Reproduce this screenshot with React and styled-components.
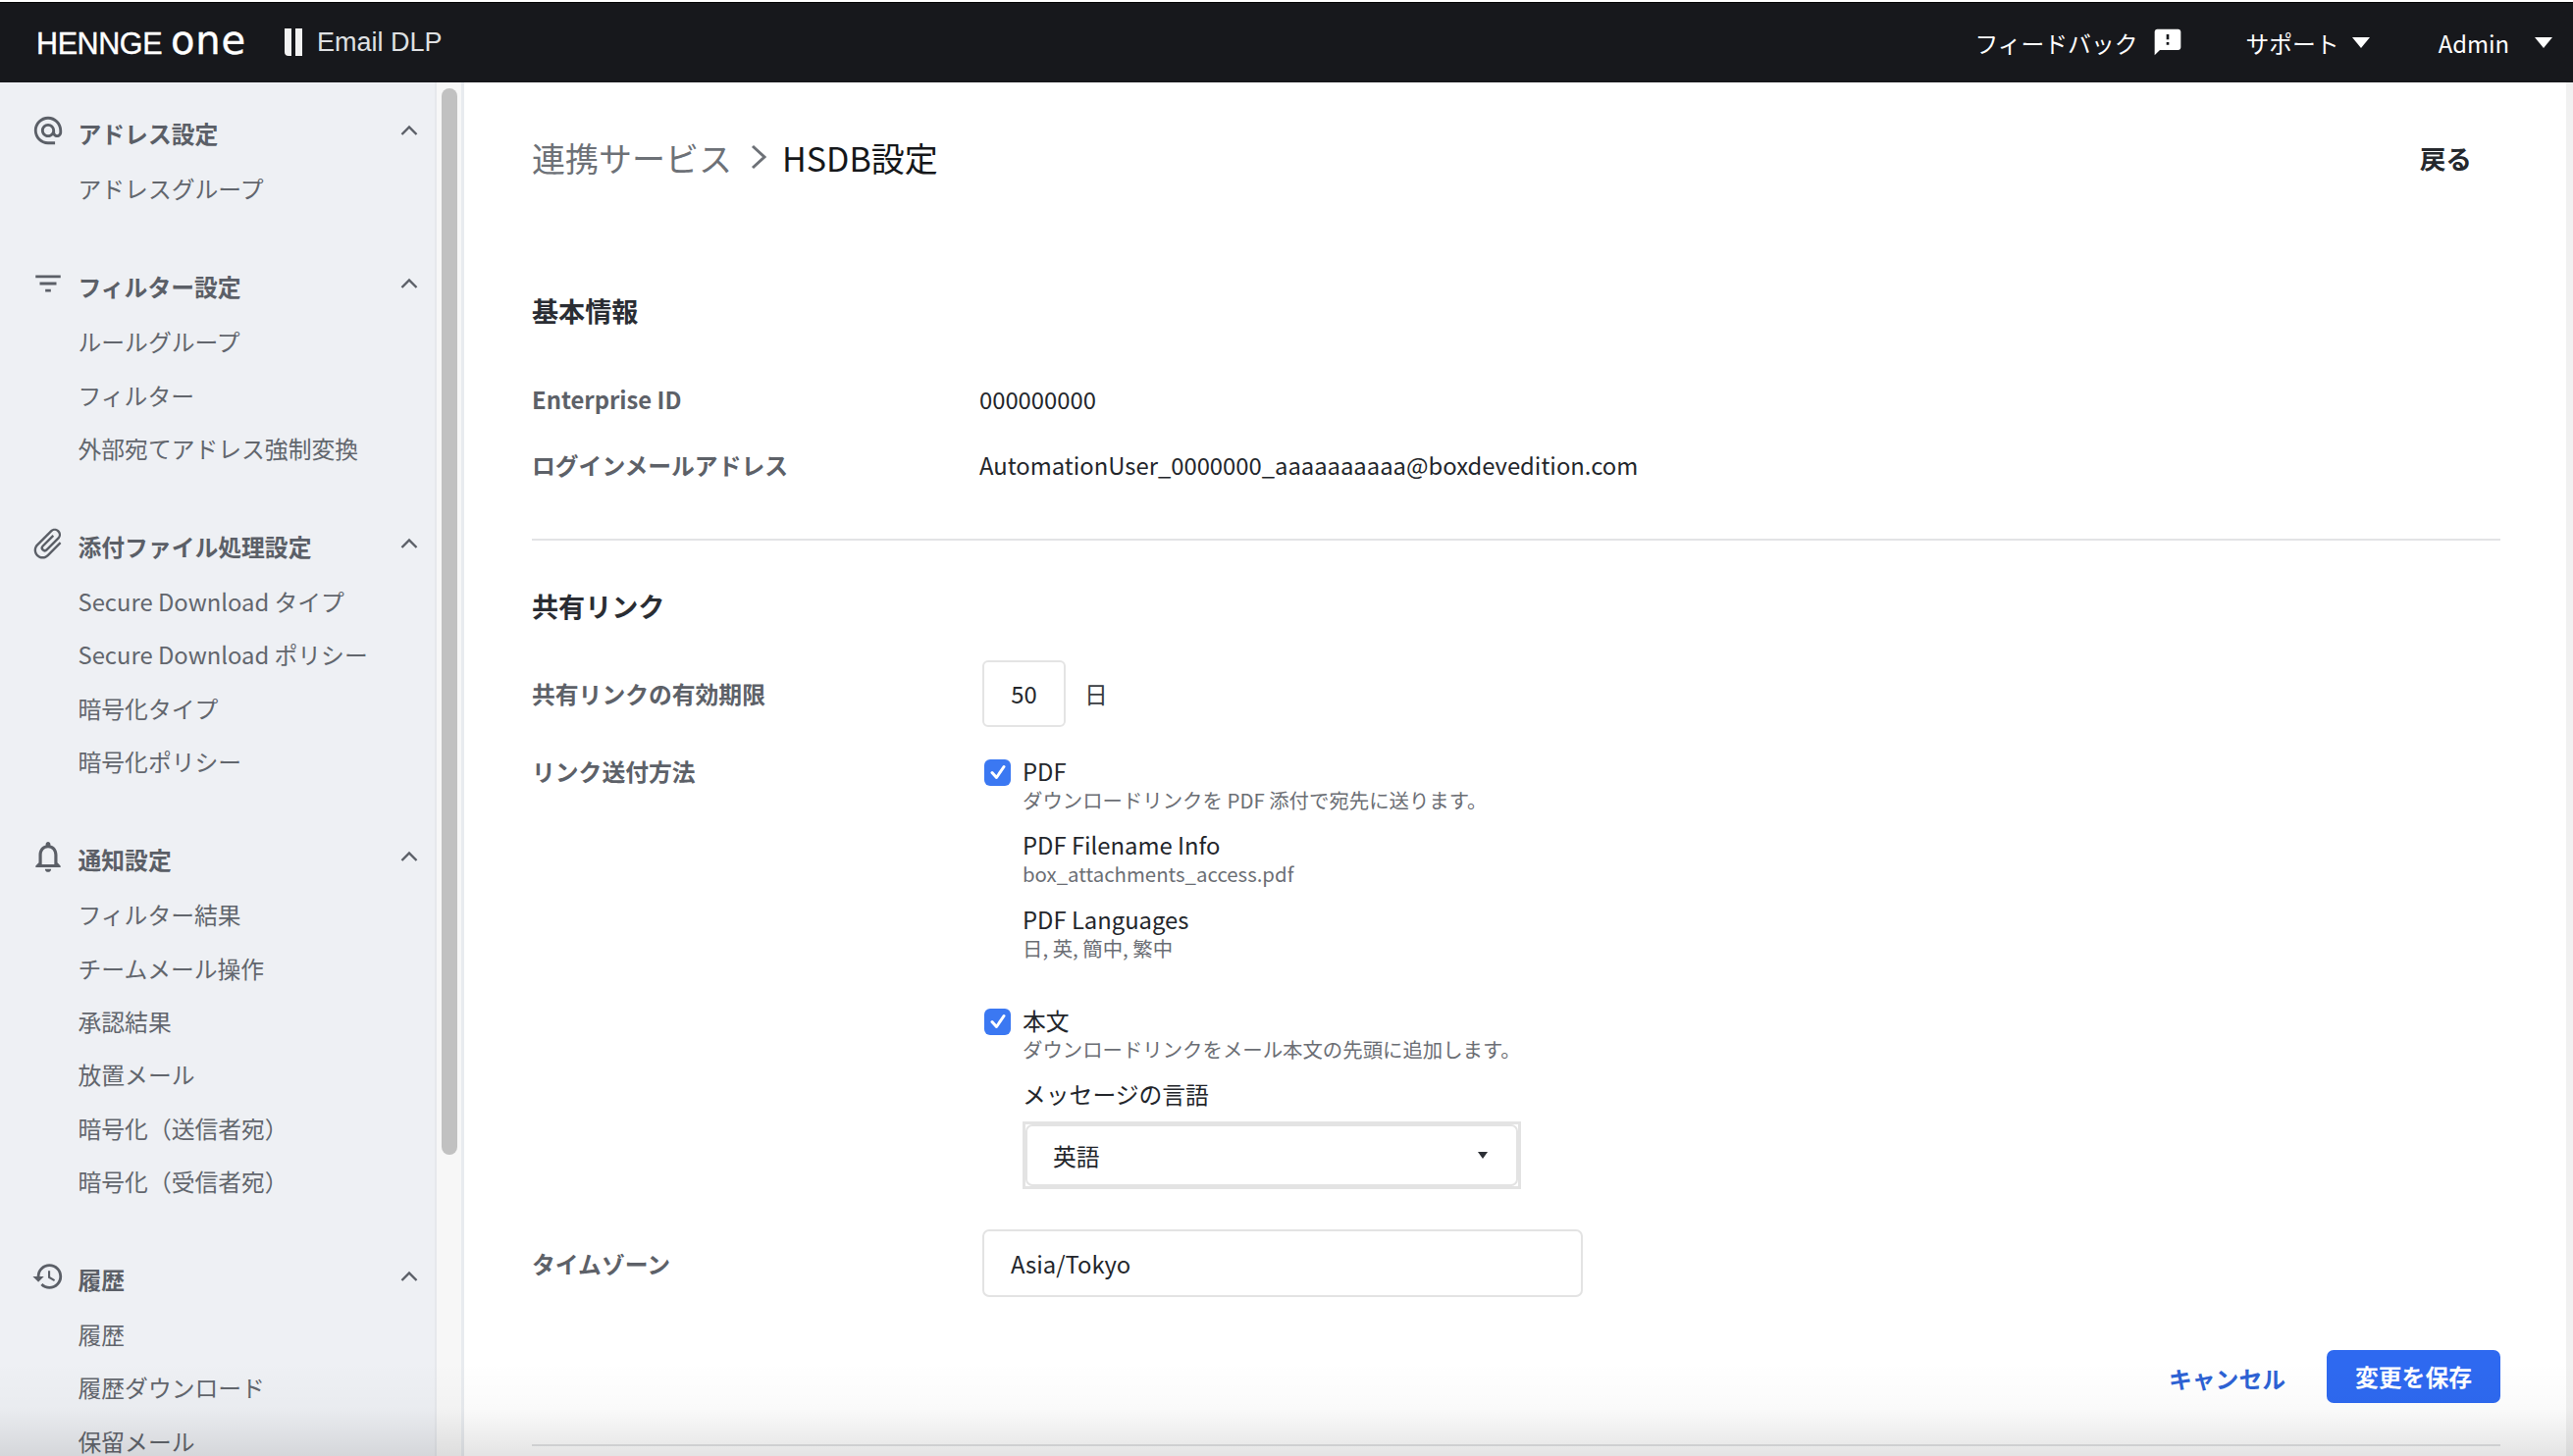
import React from "react";
import styled, { createGlobalStyle } from "styled-components";
import {
  MdAlternateEmail,
  MdFilterList,
  MdAttachFile,
  MdNotificationsNone,
  MdHistory,
  MdFeedback,
} from "react-icons/md";

const Global = createGlobalStyle`
  html, body { margin: 0; padding: 0; height: 100%; background: #fff; }
  #root { height: 100%; }
  * { box-sizing: border-box; }
  body {
    font-family: "Noto Sans CJK JP", "Noto Sans", sans-serif;
    font-size: 23.8px;
    color: #23262b;
  }
`;

const Page = styled.div`
  position: relative;
  width: 2622px;
  height: 1484px;
  display: flex;
  flex-direction: column;
  overflow: hidden;
  background: #fff;
`;

const BottomFade = styled.div`
  position: absolute;
  left: 0;
  right: 0;
  bottom: 0;
  height: 96px;
  pointer-events: none;
  background: linear-gradient(to bottom, rgba(0, 0, 0, 0) 0%, rgba(0, 0, 0, 0.02) 50%, rgba(0, 0, 0, 0.105) 100%);
`;

/* Header */
const TopBar = styled.header`
  flex: none;
  height: 84px;
  border-top: 2px solid #fff;
  background: #17181c;
  box-shadow: inset 0 1px 0 #000;
  display: flex;
  align-items: center;
  padding: 0 21px 0 37px;
  color: #fff;
`;
const Logo = styled.div`
  display: flex;
  align-items: baseline;
  width: 252px;
  white-space: nowrap;
  color: #fff;
  position: relative;
  top: -2px;
`;
const LogoWord = styled.span`
  font-family: "Liberation Sans", sans-serif;
  font-size: 30.5px;
  letter-spacing: -0.4px;
  -webkit-text-stroke: 0.4px #fff;
`;
const LogoOne = styled.span`
  font-family: "DejaVu Sans", sans-serif;
  font-size: 40px;
  line-height: 1;
  margin-left: 9px;
  letter-spacing: 0.8px;
  -webkit-text-stroke: 0.4px #fff;
`;
const ProductMark = styled.svg`
  width: 20px;
  height: 28px;
  margin-right: 14px;
  flex: none;
`;
const ProductName = styled.span`
  font-family: "Liberation Sans", sans-serif;
  font-size: 27px;
  color: #dfe0e2;
`;
const TopActions = styled.nav`
  margin-left: auto;
  display: flex;
  align-items: center;
`;
const TopAction = styled.span`
  display: flex;
  align-items: center;
  margin-left: ${(p) => p.$gap || 0}px;
  color: #fff;
  white-space: nowrap;
`;
const FeedbackIcon = styled(MdFeedback)`
  margin-left: 15px;
  width: 32px;
  height: 32px;
`;
const Caret = styled.i`
  display: block;
  margin-left: ${(p) => p.$gap}px;
  width: 0;
  height: 0;
  border-left: 9px solid transparent;
  border-right: 9px solid transparent;
  border-top: 11px solid #fff;
`;

/* Shell */
const Shell = styled.div`
  flex: 1;
  min-height: 0;
  display: flex;
`;
const SideNav = styled.aside`
  flex: none;
  width: 443px;
  background: #eef0f4;
  padding-top: 24px;
  overflow: hidden;
`;
const SideTrack = styled.div`
  flex: none;
  width: 30px;
  background: #f7f7f7;
  border-left: 2px solid #e6e8ec;
  border-right: 3px solid #e8ebef;
  padding: 6px 4px 0 5px;
`;
const SideThumb = styled.div`
  width: 16px;
  height: 1087px;
  border-radius: 8px;
  background: #c1c1c1;
`;
const NavGroup = styled.section`
  margin-bottom: 45px;
`;
const NavHead = styled.div`
  height: 54px;
  margin-bottom: 3px;
  display: flex;
  align-items: center;
  padding: 0 17px 0 32px;
  color: #5b5f67;
  font-weight: 700;
`;
const NavIcon = styled.span`
  width: 34px;
  height: 34px;
  margin-right: 13.5px;
  flex: none;
  display: flex;
  align-items: center;
  justify-content: center;
  position: relative;
  top: -2px;
  svg {
    flex: none;
    width: ${(p) => p.$size || 34}px;
    height: ${(p) => p.$size || 34}px;
    transform: rotate(${(p) => p.$rotate || 0}deg);
  }
`;
const NavChevron = styled.svg`
  width: 18px;
  height: 12px;
  margin-left: auto;
  position: relative;
  top: -2px;
`;
const NavItem = styled.div`
  height: 54.3px;
  line-height: 54.3px;
  padding-left: 79.5px;
  color: #62666d;
  white-space: nowrap;
`;

/* Main */
const Main = styled.main`
  flex: 1;
  min-width: 0;
  padding: 49px 67px 0 69px;
`;
const EdgeStrip = styled.div`
  flex: none;
  width: 7px;
  background: #f1f1f1;
`;
const TitleRow = styled.div`
  height: 54px;
  display: flex;
  align-items: center;
  font-size: 34px;
`;
const Crumb = styled.span`
  color: ${(p) => (p.$current ? "#15171a" : "#6d7177")};
`;
const CrumbSep = styled.svg`
  width: 19px;
  height: 28px;
  margin: 0 14px 0 18px;
`;
const BackLink = styled.a`
  margin-left: auto;
  margin-right: 29px;
  font-size: 26.7px;
  font-weight: 700;
  color: #25282d;
`;
const SectionHead = styled.h2`
  margin: ${(p) => p.$top}px 0 0;
  height: 40px;
  line-height: 40px;
  font-size: 27.1px;
  font-weight: 700;
  color: #2a2d33;
`;
const Row = styled.div`
  display: grid;
  grid-template-columns: 456px 1fr;
  margin-top: ${(p) => p.$top}px;
  align-items: ${(p) => (p.$start ? "start" : "center")};
`;
const RowLabel = styled.div`
  line-height: 40px;
  font-weight: 700;
  color: #5d6168;
`;
const RowValue = styled.div`
  line-height: 40px;
  color: #23262b;
`;
const Divider = styled.hr`
  margin: ${(p) => p.$top}px 0 0;
  border: 0;
  height: 2px;
  background: #e2e3e5;
`;
const DayField = styled.div`
  display: flex;
  align-items: center;
  margin-left: 3px;
`;
const NumberBox = styled.div`
  width: 85px;
  height: 68px;
  padding-bottom: 2px;
  border: 2px solid #e4e4e4;
  border-radius: 6px;
  display: flex;
  align-items: center;
  justify-content: center;
  color: #23262b;
`;
const Unit = styled.span`
  margin-left: 19px;
  padding-bottom: 2px;
  color: #3a3d42;
`;
const Options = styled.div`
  padding-top: 4px;
`;
const OptionLine = styled.label`
  display: flex;
  align-items: center;
  margin-top: ${(p) => p.$top || 0}px;
  height: 32px;
  padding-left: 5px;
  line-height: 32px;
`;
const CheckBox = styled.span`
  width: 27px;
  height: 27px;
  flex: none;
  margin: 2px 12px 0 0;
  border-radius: 6px;
  background: #3b78f2;
  display: flex;
  align-items: center;
  justify-content: center;
  svg {
    width: 18px;
    height: 18px;
  }
`;
const Hint = styled.div`
  margin-left: 44px;
  height: 26px;
  line-height: 26px;
  font-size: 20.4px;
  color: #6b6e74;
  white-space: nowrap;
`;
const SubTitle = styled.div`
  margin: ${(p) => p.$top}px 0 0 44px;
  height: 32px;
  line-height: 32px;
  color: #23262b;
`;
const SelectFrame = styled.div`
  margin: 12px 0 0 44px;
  width: 508px;
  height: 69px;
  border: 3px solid #e3e3e3;
`;
const SelectInner = styled.div`
  height: 100%;
  border: 2px solid #e3e3e3;
  border-radius: 7px;
  display: flex;
  align-items: center;
  padding: 0 29px 0 26px;
`;
const SelectArrow = styled.i`
  display: block;
  margin-left: auto;
  width: 0;
  height: 0;
  border-left: 5.5px solid transparent;
  border-right: 5.5px solid transparent;
  border-top: 7px solid #2c2f35;
`;
const TextBox = styled.div`
  margin-left: 3px;
  width: 612px;
  height: 69px;
  border: 2px solid #e3e3e3;
  border-radius: 7px;
  display: flex;
  align-items: center;
  padding: 0 27px;
`;
const Actions = styled.div`
  margin-top: 54px;
  display: flex;
  justify-content: flex-end;
  align-items: center;
`;
const CancelLink = styled.a`
  margin-right: 42px;
  font-weight: 700;
  color: #2d62d4;
  position: relative;
  top: 1px;
`;
const SaveButton = styled.button`
  width: 177px;
  height: 54px;
  padding: 0 0 2px;
  border: 0;
  border-radius: 7px;
  background: #2e69f0;
  color: #fff;
  font: 700 23.8px "Noto Sans CJK JP", sans-serif;
`;

const Chevron = () => (
  <NavChevron viewBox="0 0 18 12" fill="none">
    <polyline points="1.5,10 9,2.5 16.5,10" stroke="#5b5f67" strokeWidth="2.4" />
  </NavChevron>
);

const groups = [
  { Icon: MdAlternateEmail, title: "アドレス設定", items: ["アドレスグループ"] },
  {
    Icon: MdFilterList,
    title: "フィルター設定",
    items: ["ルールグループ", "フィルター", "外部宛てアドレス強制変換"],
  },
  {
    Icon: MdAttachFile,
    size: 38,
    rotate: 45,
    title: "添付ファイル処理設定",
    items: ["Secure Download タイプ", "Secure Download ポリシー", "暗号化タイプ", "暗号化ポリシー"],
  },
  {
    Icon: MdNotificationsNone,
    size: 38,
    title: "通知設定",
    items: ["フィルター結果", "チームメール操作", "承認結果", "放置メール", "暗号化（送信者宛）", "暗号化（受信者宛）"],
  },
  { Icon: MdHistory, title: "履歴", items: ["履歴", "履歴ダウンロード", "保留メール"] },
];

const Check = () => (
  <svg viewBox="0 0 18 18" fill="none">
    <polyline points="3,9.5 7.5,14.5 15,3.5" stroke="#fff" strokeWidth="3" strokeLinecap="round" strokeLinejoin="round" />
  </svg>
);

export default function App() {
  return (
    <Page>
      <Global />
      <TopBar>
        <Logo>
          <LogoWord>HENNGE</LogoWord>
          <LogoOne>one</LogoOne>
        </Logo>
        <ProductMark viewBox="0 0 20 28">
          <path d="M1 0h7v28H5c-2.500 0-4-1.500-4-4z" fill="#f2f2f2" />
          <path d="M12 0h7v28h-7z" fill="#f2f2f2" />
        </ProductMark>
        <ProductName>Email DLP</ProductName>
        <TopActions>
          <TopAction>
            フィードバック
            <FeedbackIcon />
          </TopAction>
          <TopAction $gap={63}>
            サポート
            <Caret $gap={13} />
          </TopAction>
          <TopAction $gap={70}>
            Admin
            <Caret $gap={26} />
          </TopAction>
        </TopActions>
      </TopBar>
      <Shell>
        <SideNav>
          {groups.map(({ Icon, size, rotate, title, items }) => (
            <NavGroup key={title}>
              <NavHead>
                <NavIcon $size={size} $rotate={rotate}>
                  <Icon />
                </NavIcon>
                {title}
                <Chevron />
              </NavHead>
              {items.map((i) => (
                <NavItem key={i}>{i}</NavItem>
              ))}
            </NavGroup>
          ))}
        </SideNav>
        <SideTrack>
          <SideThumb />
        </SideTrack>
        <Main>
          <TitleRow>
            <Crumb>連携サービス</Crumb>
            <CrumbSep viewBox="0 0 19 28" fill="none">
              <polyline points="3,3 15,14 3,25" stroke="#6d7177" strokeWidth="3" />
            </CrumbSep>
            <Crumb $current>HSDB設定</Crumb>
            <BackLink>戻る</BackLink>
          </TitleRow>

          <SectionHead $top={109.5}>基本情報</SectionHead>
          <Row $top={50}>
            <RowLabel>Enterprise ID</RowLabel>
            <RowValue>000000000</RowValue>
          </Row>
          <Row $top={27}>
            <RowLabel>ログインメールアドレス</RowLabel>
            <RowValue>AutomationUser_0000000_aaaaaaaaaa@boxdevedition.com</RowValue>
          </Row>
          <Divider $top={55.5} />

          <SectionHead $top={47}>共有リンク</SectionHead>
          <Row $top={35}>
            <RowLabel>共有リンクの有効期限</RowLabel>
            <DayField>
              <NumberBox>50</NumberBox>
              <Unit>日</Unit>
            </DayField>
          </Row>
          <Row $top={25} $start>
            <RowLabel>リンク送付方法</RowLabel>
            <Options>
              <OptionLine>
                <CheckBox>
                  <Check />
                </CheckBox>
                PDF
              </OptionLine>
              <Hint>ダウンロードリンクを PDF 添付で宛先に送ります。</Hint>
              <SubTitle $top={17}>PDF Filename Info</SubTitle>
              <Hint>box_attachments_access.pdf</Hint>
              <SubTitle $top={18}>PDF Languages</SubTitle>
              <Hint>日, 英, 簡中, 繁中</Hint>
              <OptionLine $top={45}>
                <CheckBox>
                  <Check />
                </CheckBox>
                本文
              </OptionLine>
              <Hint>ダウンロードリンクをメール本文の先頭に追加します。</Hint>
              <SubTitle $top={17}>メッセージの言語</SubTitle>
              <SelectFrame>
                <SelectInner>
                  英語
                  <SelectArrow />
                </SelectInner>
              </SelectFrame>
            </Options>
          </Row>
          <Row $top={41}>
            <RowLabel>タイムゾーン</RowLabel>
            <TextBox>Asia/Tokyo</TextBox>
          </Row>
          <Actions>
            <CancelLink>キャンセル</CancelLink>
            <SaveButton>変更を保存</SaveButton>
          </Actions>
          <Divider $top={42} />
        </Main>
        <EdgeStrip />
      </Shell>
      <BottomFade />
    </Page>
  );
}
